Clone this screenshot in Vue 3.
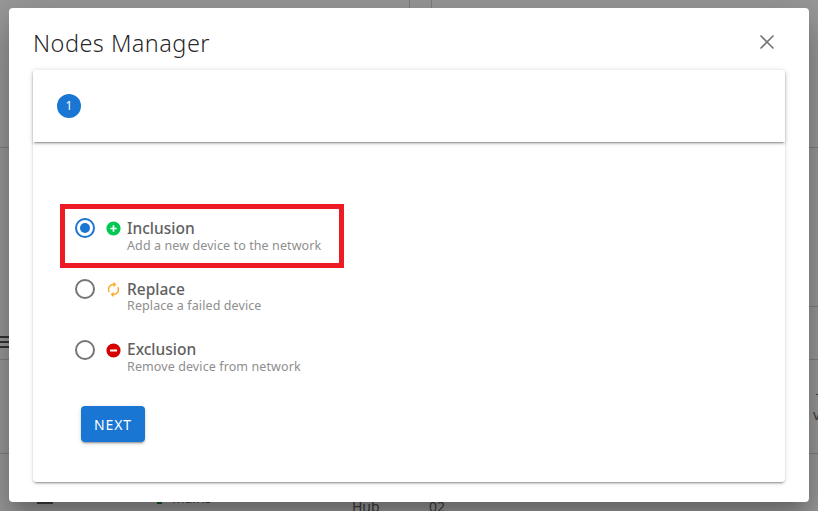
<template>
  <div class="page">
    <div class="backdrop">
      <span class="line hl1"></span>
      <span class="line hl2"></span>
      <span class="line hl3"></span>
      <span class="line hl4"></span>
      <span class="line vl1"></span>
      <span class="line vl2"></span>
      <span class="menu"><i></i><i></i><i></i></span>
      <span class="dash"></span>
      <span class="dot"></span>
      <span class="tick"></span>
      <span class="bgtext main">Mains</span>
      <span class="bgtext hub">Hub</span>
      <span class="bgtext num">02</span>
      <span class="bgtext edge">v</span>
    </div>
    <div class="scrim"></div>
    <section class="dialog">
      <header class="title-row">
        <h2>Nodes Manager</h2>
        <svg class="close" viewBox="0 0 24 24"><path d="M5.5 5.5 18.5 18.5M18.5 5.5 5.5 18.5" /></svg>
      </header>
      <div class="card">
        <div class="stepper"><span class="step">1</span></div>
        <div class="content">
          <ul class="options">
            <li v-for="o in options" :key="o.title" class="option" :class="{ marked: o.checked }">
              <span class="radio" :class="{ on: o.checked }"></span>
              <svg class="icon" viewBox="0 0 24 24" :style="{ fill: o.color }"><path :d="o.icon" /></svg>
              <div class="label">
                <strong>{{ o.title }}</strong>
                <small>{{ o.desc }}</small>
              </div>
            </li>
          </ul>
          <button class="next" type="button">NEXT</button>
        </div>
      </div>
    </section>
  </div>
</template>

<script setup>
const options = [
  {
    title: 'Inclusion',
    desc: 'Add a new device to the network',
    color: '#00c853',
    checked: true,
    icon: 'M12 2a10 10 0 1 0 0 20 10 10 0 0 0 0-20zm4.5 11.2h-3.3v3.3h-2.4v-3.3H7.5v-2.4h3.3V7.5h2.4v3.3h3.3v2.4z'
  },
  {
    title: 'Replace',
    desc: 'Replace a failed device',
    color: '#ffa726',
    checked: false,
    icon: 'M12 6v3l4-4-4-4v3c-4.42 0-8 3.58-8 8 0 1.57.46 3.03 1.24 4.26L6.7 14.8A5.87 5.87 0 0 1 6 12c0-3.31 2.69-6 6-6zm6.76 1.74L17.3 9.2c.44.84.7 1.79.7 2.8 0 3.31-2.69 6-6 6v-3l-4 4 4 4v-3c4.42 0 8-3.58 8-8 0-1.57-.46-3.03-1.24-4.26z'
  },
  {
    title: 'Exclusion',
    desc: 'Remove device from network',
    color: '#d50000',
    checked: false,
    icon: 'M12 2a10 10 0 1 0 0 20 10 10 0 0 0 0-20zm5 11.5H7v-3h10v3z'
  }
]
</script>

<style>
html, body { margin: 0; height: 100%; overflow: hidden; }
</style>

<style scoped>
.page {
  position: relative;
  width: 818px;
  height: 511px;
  overflow: hidden;
  display: flex;
  align-items: flex-start;
  justify-content: center;
  font-family: "Noto Sans", "Noto Sans CJK KR", sans-serif;
  background: #fff;
}
.backdrop { position: absolute; inset: 0; }
.line { position: absolute; background: #cfcfcf; }
.hl1 { left: 0; top: 147px; width: 818px; height: 1px; }
.hl2 { left: 0; top: 359px; width: 818px; height: 1px; }
.hl3 { left: 0; top: 453px; width: 818px; height: 1px; }
.hl4 { left: 800px; top: 306px; width: 18px; height: 1px; }
.vl1 { left: 409px; top: 0; width: 1px; height: 8px; }
.vl2 { left: 431px; top: 0; width: 1px; height: 8px; }
.menu { position: absolute; left: 0; top: 336px; width: 9px; display: flex; flex-direction: column; gap: 3px; }
.menu i { display: block; height: 2px; background: #444; }
.dash { position: absolute; left: 37px; top: 501px; width: 16px; height: 3px; background: #555; }
.dot { position: absolute; left: 157px; top: 500px; width: 5px; height: 4px; background: #1b7a2a; }
.tick { position: absolute; left: 816px; top: 394px; width: 2px; height: 1px; background: #555; }
.bgtext { position: absolute; font-size: 14px; line-height: 18px; color: #555; }
.main { left: 172px; top: 489px; }
.hub { left: 352px; top: 498px; }
.num { left: 429px; top: 498px; }
.edge { left: 813px; top: 406px; }
.scrim {
  position: absolute;
  inset: 0;
  background: rgba(33, 33, 33, 0.46);
}
.dialog {
  position: relative;
  box-sizing: border-box;
  width: 800px;
  height: 494px;
  margin-top: 8px;
  padding: 0 24px 20px;
  background: #fff;
  border-radius: 4px;
  box-shadow: 0 11px 15px -7px rgba(0,0,0,.2), 0 24px 38px 3px rgba(0,0,0,.14), 0 9px 46px 8px rgba(0,0,0,.12);
  display: flex;
  flex-direction: column;
}
.title-row {
  height: 62px;
  flex: none;
  display: flex;
  align-items: center;
  justify-content: space-between;
}
h2 {
  margin: 8px 0 0;
  font-size: 23.5px;
  font-weight: 300;
  letter-spacing: 0.45px;
  line-height: 32px;
  color: rgba(0,0,0,.87);
}
.close { width: 24px; height: 24px; margin: 6px 6px 0 0; fill: none; stroke: #757575; stroke-width: 1.6; }
.card {
  flex: 1;
  background: #fff;
  border-radius: 4px;
  box-shadow: 0 3px 1px -2px rgba(0,0,0,.2), 0 2px 2px 0 rgba(0,0,0,.14), 0 1px 5px 0 rgba(0,0,0,.12);
  display: flex;
  flex-direction: column;
}
.stepper {
  height: 72px;
  flex: none;
  box-sizing: border-box;
  padding-left: 24px;
  display: flex;
  align-items: center;
  box-shadow: 0 3px 1px -2px rgba(0,0,0,.2), 0 2px 2px 0 rgba(0,0,0,.14), 0 1px 5px 0 rgba(0,0,0,.12);
}
.step {
  width: 24px;
  height: 24px;
  border-radius: 50%;
  background: #1976d2;
  color: #fff;
  font-size: 12px;
  line-height: 24px;
  text-align: center;
}
.content { padding: 62px 0 0 27px; }
.options { list-style: none; margin: 0; padding: 0; }
.option {
  position: relative;
  height: 61px;
  box-sizing: border-box;
  padding: 0 0 0 15px;
  display: flex;
  align-items: flex-start;
}
.marked::before {
  content: "";
  position: absolute;
  left: 0;
  top: 0;
  width: 284px;
  height: 64px;
  box-sizing: border-box;
  border: 5px solid #ed1c24;
}
.radio {
  position: relative;
  flex: none;
  width: 20px;
  height: 20px;
  margin-top: 14px;
  border: 2px solid #757575;
  border-radius: 50%;
  box-sizing: border-box;
}
.radio.on { border-color: #1976d2; }
.radio.on::after {
  content: "";
  position: absolute;
  inset: 3px;
  border-radius: 50%;
  background: #1976d2;
}
.icon { flex: none; width: 17px; height: 17px; margin: 16px 0 0 10px; }
.label { margin: 14px 0 0 5px; display: flex; flex-direction: column; }
strong {
  font-size: 15.5px;
  font-weight: 500;
  line-height: 20px;
  color: #616161;
}
small {
  font-size: 12.5px;
  letter-spacing: 0.1px;
  line-height: 15px;
  color: #8e8e8e;
}
.option:nth-child(2) small { line-height: 13px; }
.option:nth-child(3) strong { margin-top: -1px; }
.next {
  display: block;
  margin: 19px 0 0 21px;
  width: 64px;
  height: 36px;
  border: 0;
  border-radius: 4px;
  padding: 0;
  background: #1976d2;
  color: #fff;
  font: 400 14px "Noto Sans", "Noto Sans CJK KR", sans-serif;
  letter-spacing: 0.9px;
  box-shadow: 0 3px 1px -2px rgba(0,0,0,.2), 0 2px 2px 0 rgba(0,0,0,.14), 0 1px 5px 0 rgba(0,0,0,.12);
}
</style>
